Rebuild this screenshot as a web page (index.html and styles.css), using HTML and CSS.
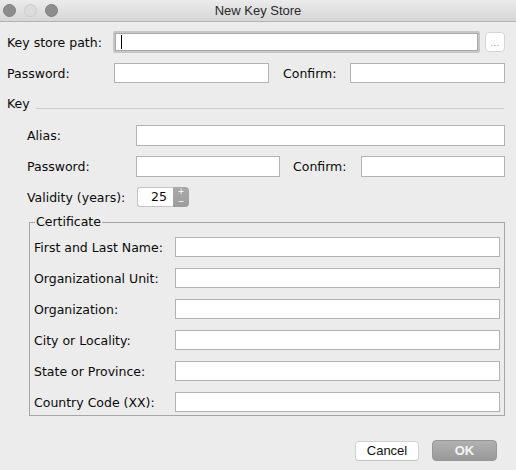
FILE: index.html
```html
<!DOCTYPE html>
<html>
<head>
<meta charset="utf-8">
<title>New Key Store</title>
<link rel="stylesheet" href="styles.css">
</head>
<body>
<div class="window">
  <div class="titlebar">
    <div class="lights">
      <span class="light dark"></span>
      <span class="light pale"></span>
      <span class="light dark"></span>
    </div>
    <div class="title">New Key Store</div>
  </div>
  <div class="content">
    <div class="row r-path">
      <label class="lbl w-path">Key store path:</label>
      <div class="focus"><div class="field inner"><span class="caret"></span></div></div>
      <div class="browse">...</div>
    </div>
    <div class="row r-pass">
      <label class="lbl w-pass">Password:</label>
      <div class="field w155"></div>
      <label class="lbl w-confirm1">Confirm:</label>
      <div class="field w155"></div>
    </div>
    <div class="section-head">
      <span class="lbl w-key">Key</span>
      <div class="rule"></div>
    </div>
    <div class="key">
      <div class="row r-alias">
        <label class="lbl w-klabel">Alias:</label>
        <div class="field grow h21"></div>
      </div>
      <div class="row r-kpass">
        <label class="lbl w-klabel">Password:</label>
        <div class="field w144 h21"></div>
        <label class="lbl w-confirm2">Confirm:</label>
        <div class="field w144 h21"></div>
      </div>
      <div class="row r-valid">
        <label class="lbl w-klabel">Validity (years):</label>
        <div class="spinner">
          <div class="spin-value">25</div>
          <div class="spin-btn"><span class="spin-up">+</span><span class="spin-down">−</span></div>
        </div>
      </div>
    </div>
    <fieldset class="cert">
      <legend>Certificate</legend>
      <div class="cert-rows">
        <div class="row crow"><label class="lbl w-clabel">First and Last Name:</label><div class="field grow"></div></div>
        <div class="row crow"><label class="lbl w-clabel">Organizational Unit:</label><div class="field grow"></div></div>
        <div class="row crow"><label class="lbl w-clabel">Organization:</label><div class="field grow"></div></div>
        <div class="row crow"><label class="lbl w-clabel">City or Locality:</label><div class="field grow"></div></div>
        <div class="row crow"><label class="lbl w-clabel">State or Province:</label><div class="field grow"></div></div>
        <div class="row crow"><label class="lbl w-clabel">Country Code (XX):</label><div class="field grow"></div></div>
      </div>
    </fieldset>
    <div class="buttons">
      <div class="btn cancel">Cancel</div>
      <div class="btn ok">OK</div>
    </div>
  </div>
</div>
</body>
</html>
```
FILE: styles.css
```css
html, body {
  margin: 0;
  padding: 0;
}
body {
  width: 516px;
  height: 470px;
  background: #ececec;
  overflow: hidden;
}
.window {
  width: 516px;
  height: 470px;
  background: #ececec;
}
.titlebar {
  height: 21px;
  border-bottom: 1px solid #b4b4b4;
  background: linear-gradient(#ebebeb, #d6d6d6);
  display: flex;
  align-items: center;
  position: relative;
}
.lights {
  display: flex;
  gap: 8px;
  padding-left: 3px;
  position: absolute;
  left: 0;
  top: 4px;
}
.light {
  width: 11px;
  height: 11px;
  border-radius: 50%;
  box-sizing: content-box;
}
.light.dark {
  background: #8d8d8d;
  border: 1px solid #7e7e7e;
}
.light.pale {
  background: #dcdcdc;
  border: 1px solid #cdcdcd;
}
.title {
  flex: 1;
  text-align: center;
  font-family: "Liberation Sans", Arial, sans-serif;
  font-size: 13px;
  color: #2a2a2a;
}
.content {
  padding: 0 11px 0 7px;
}
.row {
  display: flex;
  align-items: center;
}
.lbl {
  font-family: "DejaVu Sans", "Lucida Grande", sans-serif;
  font-size: 12.5px;
  color: #0a0a0a;
  flex: none;
  white-space: nowrap;
}
.field {
  box-sizing: border-box;
  height: 20px;
  background: #fff;
  border: 1px solid #b2b2b2;
  flex: none;
}
.grow { flex: 1; }
.h21 { height: 21px; }
.w155 { width: 155px; }
.w144 { width: 144px; }

.r-path {
  margin-top: 9px;
  height: 22px;
}
.w-path { width: 106px; }
.focus {
  box-sizing: border-box;
  width: 367px;
  height: 22px;
  padding: 2px;
  background: #c6c6c6;
  border-radius: 2px;
}
.focus .inner {
  width: 100%;
  height: 18px;
  border: 1px solid #a9a9a9;
  display: flex;
  align-items: center;
  padding-left: 5px;
}
.caret {
  width: 1px;
  height: 14px;
  background: #000;
}
.browse {
  box-sizing: border-box;
  margin-left: 5px;
  width: 20px;
  height: 20px;
  background: #fff;
  border: 1px solid #d4d4d4;
  border-radius: 4px;
  font-family: "DejaVu Sans", sans-serif;
  font-size: 8px;
  color: #8a8a8a;
  text-align: center;
  line-height: 22px;
  letter-spacing: 0.5px;
}
.r-pass {
  margin-top: 10px;
  height: 20px;
}
.w-pass { width: 107px; }
.w-confirm1 { width: 67px; margin-left: 14px; }

.section-head {
  margin-top: 13px;
  height: 16px;
  display: flex;
  align-items: flex-start;
}
.w-key {
  width: 29px;
  line-height: 16px;
}
.rule {
  flex: 1;
  margin-top: 12px;
  margin-right: 1px;
  border-top: 1px solid #cdcdcd;
}
.key {
  padding-left: 20px;
}
.w-klabel { width: 109px; }
.r-alias {
  margin-top: 13px;
  height: 21px;
}
.r-kpass {
  margin-top: 10px;
  height: 21px;
}
.w-confirm2 { width: 68px; margin-left: 13px; }
.r-valid {
  margin-top: 10px;
  height: 20px;
}
.spinner {
  margin-left: 1px;
  display: flex;
  height: 20px;
  width: 52px;
}
.spin-value {
  box-sizing: border-box;
  width: 36px;
  height: 20px;
  background: #fff;
  border: 1px solid #c4c4c4;
  border-right: none;
  border-radius: 3px 0 0 3px;
  font-family: "DejaVu Sans", sans-serif;
  font-size: 12.5px;
  color: #0a0a0a;
  text-align: right;
  padding-right: 6px;
  line-height: 18px;
}
.spin-btn {
  width: 16px;
  height: 20px;
  background: linear-gradient(#aaaaaa, #9c9c9c);
  border-radius: 0 4px 4px 0;
  display: flex;
  flex-direction: column;
  align-items: center;
  color: #fff;
  font-family: "DejaVu Sans", sans-serif;
  font-size: 8px;
}
.spin-up,
.spin-down {
  display: block;
  height: 10px;
  line-height: 10px;
  overflow: hidden;
}
.spin-up { padding-top: 0; }
.cert {
  margin: 7px 0 0 22px;
  padding: 0 4px 3px 4px;
  border: 1px solid #a6a6a6;
  min-width: 0;
}
.cert legend {
  font-family: "DejaVu Sans", "Lucida Grande", sans-serif;
  font-size: 12.5px;
  color: #0a0a0a;
  line-height: 16px;
  padding: 0 1px;
  margin-left: 1px;
}
.cert-rows {
  margin-top: 7px;
  display: flex;
  flex-direction: column;
  gap: 11px;
}
.crow { height: 20px; }
.w-clabel { width: 141px; }

.buttons {
  margin-top: 24px;
  display: flex;
  justify-content: flex-end;
  align-items: center;
  gap: 13px;
  padding-right: 8px;
  height: 21px;
}
.btn {
  box-sizing: border-box;
  border-radius: 4px;
  text-align: center;
  font-family: "Liberation Sans", Arial, sans-serif;
  font-size: 13px;
}
.cancel {
  width: 64px;
  height: 20px;
  line-height: 18px;
  background: #fff;
  border: 1px solid #d2d2d2;
  border-bottom-color: #c2c2c2;
  color: #111;
}
.ok {
  width: 65px;
  height: 21px;
  line-height: 19px;
  background: linear-gradient(#b1b1b1, #999999);
  border: 1px solid #979797;
  color: #f4f4f4;
  font-weight: bold;
}
```
